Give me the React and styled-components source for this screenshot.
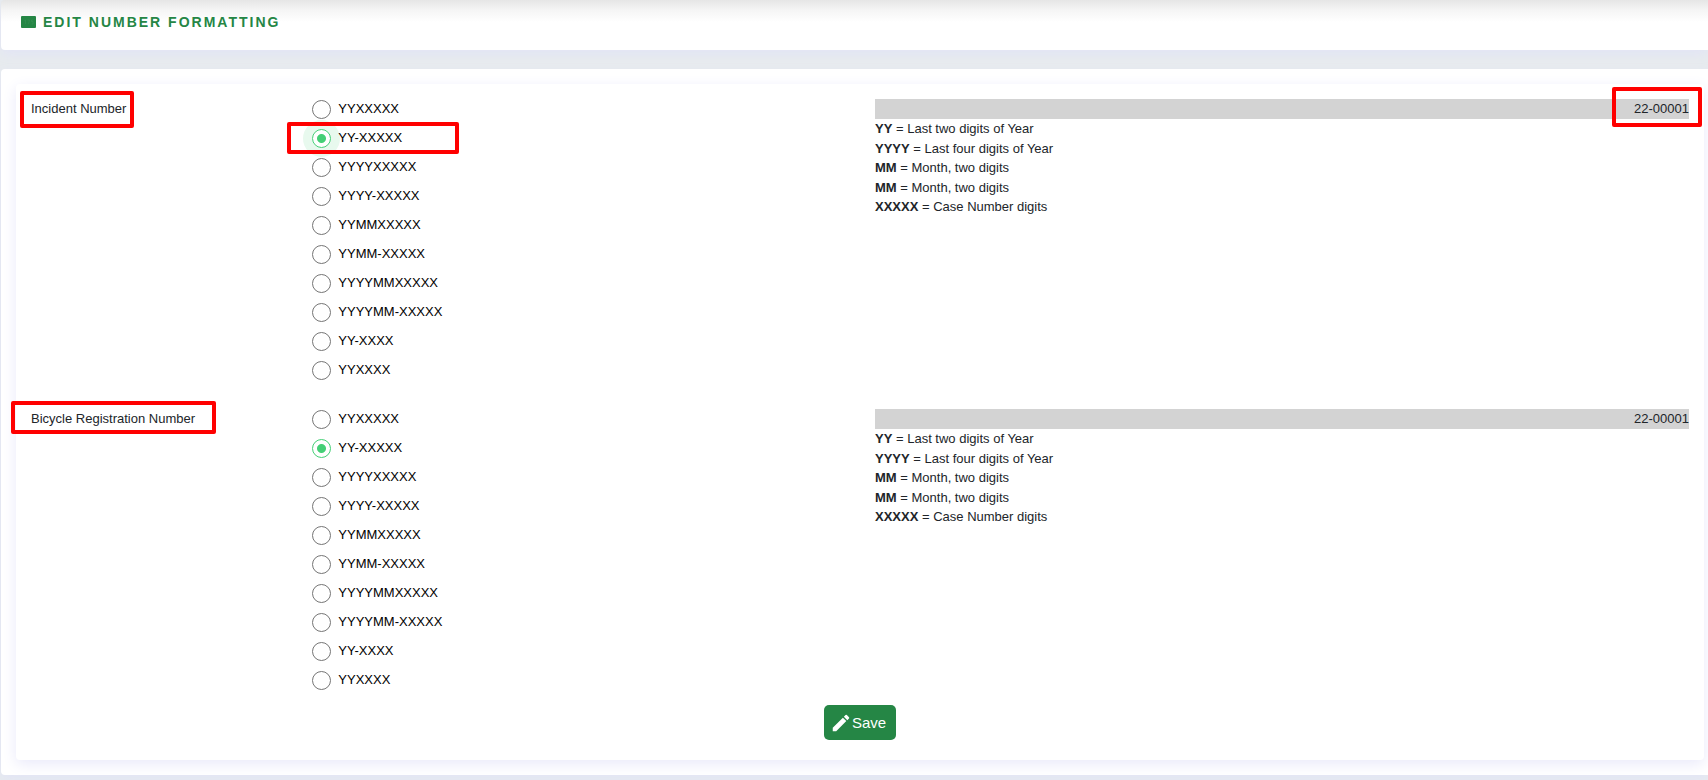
import { useState } from 'react';
import styled, { createGlobalStyle } from 'styled-components';
import { MdEdit } from 'react-icons/md';

const GlobalStyle = createGlobalStyle`
  * {
    box-sizing: border-box;
  }

  body {
    margin: 0;
    background-color: #e7ebee;
    color: #212529;
    font-family: 'Liberation Sans', Arial, sans-serif;
    font-size: 13px;
    line-height: 1.5;
  }
`;

const Page = styled.div`
  display: flex;
  flex-direction: column;
  gap: 19px;
  padding: 0 0 5px 1px;
  overflow: hidden;
`;

const Panel = styled.section`
  background-color: #fff;
  border-radius: 4px 0 0 4px;
  box-shadow: 0 4px 12px #e2e4f6;
`;

const PageHeader = styled(Panel)`
  display: flex;
  align-items: flex-start;
  gap: 7px;
  height: 50px;
  padding: 11px 20px;
  background-image: linear-gradient(#e6e6e6, #f5f5f5 10px, #fff 22px);
`;

const HeaderIcon = styled.svg`
  width: 15px;
  height: 12px;
  margin-top: 5px;
`;

const Title = styled.h1`
  margin: 0;
  color: #258645;
  font-size: 14px;
  font-weight: 700;
  line-height: 22px;
  letter-spacing: 2px;
  text-transform: uppercase;
`;

const Body = styled(Panel)`
  padding: 15px 4px 15px 15px;
`;

const Card = styled.form`
  padding: 15px 0 20px;
  border-radius: 4px;
  box-shadow: 0 4px 15px #e9e9fa;
`;

const Rows = styled.div`
  display: grid;
  gap: 20px;
  margin-bottom: 6px;
`;

const Row = styled.fieldset`
  display: grid;
  grid-template-columns: 2fr 4fr 6fr;
  margin: 0;
  padding: 0;
  border: none;
`;

const Cell = styled.div`
  padding: 0 15px;
`;

const Marked = styled.div`
  position: relative;
  width: ${({ $fit }) => ($fit ? 'fit-content' : 'auto')};
`;

const Marker = styled.span`
  position: absolute;
  inset: ${({ $inset }) => $inset};
  width: ${({ $width }) => $width || 'auto'};
  border: 4px solid #f00;
  border-radius: 2px;
  pointer-events: none;
`;

const Option = styled.label`
  display: flex;
  align-items: flex-start;
  gap: 7px;
  height: 29px;
  color: #000;
`;

const Radio = styled.input`
  appearance: none;
  width: 19px;
  height: 19px;
  margin: 1px 0 0;
  border: 1px solid #757575;
  border-radius: 50%;

  &:checked {
    border-color: #44cf76;
    background: radial-gradient(circle, #44cf76 4px, #fff 5px);
    box-shadow: ${({ $focused }) => ($focused ? '0 0 0 9px #e8f9ee' : 'none')};
  }
`;

const Preview = styled.output`
  display: block;
  height: 20px;
  background-color: #d3d3d3;
  text-align: right;
`;

const Actions = styled.div`
  display: flex;
  justify-content: center;
`;

const SaveButton = styled.button`
  display: flex;
  align-items: center;
  height: 35px;
  padding: 0 10px 0 6px;
  border: none;
  border-radius: 5px;
  background-color: #258645;
  color: #fff;
  font-family: inherit;
  font-size: 15px;
  cursor: pointer;
`;

const FORMATS = [
  'YYXXXXX',
  'YY-XXXXX',
  'YYYYXXXXX',
  'YYYY-XXXXX',
  'YYMMXXXXX',
  'YYMM-XXXXX',
  'YYYYMMXXXXX',
  'YYYYMM-XXXXX',
  'YY-XXXX',
  'YYXXXX',
];

const LEGEND = [
  ['YY', 'Last two digits of Year'],
  ['YYYY', 'Last four digits of Year'],
  ['MM', 'Month, two digits'],
  ['MM', 'Month, two digits'],
  ['XXXXX', 'Case Number digits'],
];

const NUMBERS = { YY: '22', YYYY: '2022', MM: '01', XXXXX: '00001', XXXX: '0001' };

const preview = (format) =>
  format.replace(/YYYY|YY|MM|XXXXX|XXXX/g, (part) => NUMBERS[part]);

const FormatRow = ({ name, title, labelInset, highlighted }) => {
  const [format, setFormat] = useState('YY-XXXXX');

  return (
    <Row aria-labelledby={`${name}-title`}>
      <Cell>
        <Marked $fit>
          <span id={`${name}-title`}>{title}</span>
          <Marker $inset={labelInset} />
        </Marked>
      </Cell>
      <Cell>
        {FORMATS.map((item) => (
          <Marked key={item}>
            <Option>
              <Radio
                type="radio"
                name={name}
                value={item}
                checked={format === item}
                $focused={highlighted}
                onChange={() => setFormat(item)}
              />
              {item}
            </Option>
            {highlighted && item === 'YY-XXXXX' && (
              <Marker $inset="-6px auto 3px -25px" $width="172px" />
            )}
          </Marked>
        ))}
      </Cell>
      <Cell>
        <Marked>
          <Preview>{preview(format)}</Preview>
          {highlighted && <Marker $inset="-12px -13px -8px auto" $width="90px" />}
        </Marked>
        {LEGEND.map(([code, text], index) => (
          <div key={index}>
            <b>{code}</b> = {text}
          </div>
        ))}
      </Cell>
    </Row>
  );
};

const App = () => (
  <>
    <GlobalStyle />
    <Page>
      <PageHeader as="header">
        <HeaderIcon viewBox="0 0 15 12" aria-hidden="true">
          <rect width="15" height="12" rx="1" fill="#258645" />
          <path
            d="M3.5 4.5l1-.5v4M6.5 4h2l-1 4M12 4h-1.500v1.500h1.500V8h-1.500"
            fill="none"
            stroke="#3c9158"
            strokeWidth=".5"
          />
        </HeaderIcon>
        <Title>Edit Number Formatting</Title>
      </PageHeader>
      <Body as="main">
        <Card onSubmit={(event) => event.preventDefault()}>
          <Rows>
            <FormatRow
              name="incident"
              title="Incident Number"
              labelInset="-8px -8px -9px -11px"
              highlighted
            />
            <FormatRow
              name="bicycle"
              title="Bicycle Registration Number"
              labelInset="-8px -21px -5px -20px"
            />
          </Rows>
          <Actions>
            <SaveButton type="submit">
              <MdEdit size={22} />
              Save
            </SaveButton>
          </Actions>
        </Card>
      </Body>
    </Page>
  </>
);

export default App;
